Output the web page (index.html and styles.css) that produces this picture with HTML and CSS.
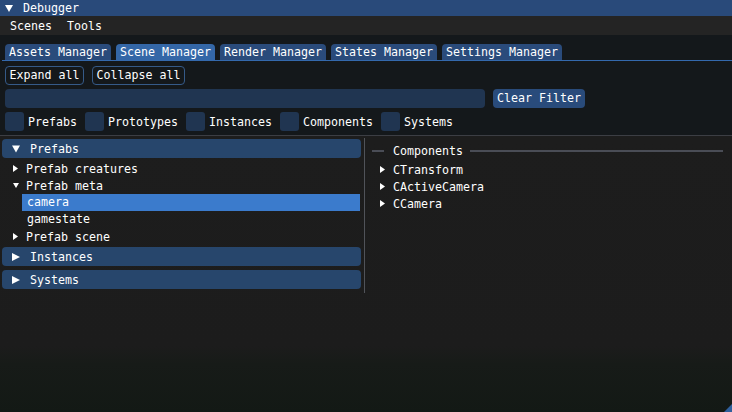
FILE: index.html
```html
<!DOCTYPE html>
<html>
<head>
<meta charset="utf-8">
<link rel="stylesheet" href="styles.css">
</head>
<body>
<div class="window">
  <div class="titlebar">
    <svg class="tri-title" width="8" height="7" viewBox="0 0 8 7"><polygon points="0,0 8,0 4,7" fill="#fff"/></svg>
    <span>Debugger</span>
  </div>
  <div class="menubar"><span>Scenes</span><span>Tools</span></div>
  <div class="top">
    <div class="tabbar">
      <div class="tab">Assets Manager</div>
      <div class="tab active">Scene Manager</div>
      <div class="tab">Render Manager</div>
      <div class="tab">States Manager</div>
      <div class="tab">Settings Manager</div>
    </div>
    <div class="row buttons">
      <button class="btn outline">Expand all</button>
      <button class="btn outline">Collapse all</button>
    </div>
    <div class="row filter">
      <div class="input"></div>
      <button class="btn filled">Clear Filter</button>
    </div>
    <div class="row checks">
      <label class="check"><span class="box"></span>Prefabs</label>
      <label class="check"><span class="box"></span>Prototypes</label>
      <label class="check"><span class="box"></span>Instances</label>
      <label class="check"><span class="box"></span>Components</label>
      <label class="check"><span class="box"></span>Systems</label>
    </div>
  </div>
  <div class="sep"></div>
  <div class="panels">
    <div class="left">
      <div class="header">
        <svg class="htri" width="8" height="8" viewBox="0 0 8 8"><polygon points="0,0.5 8,0.5 4,7.5" fill="#fff"/></svg>
        <span>Prefabs</span>
      </div>
      <div class="tree">
        <div class="node">
          <svg class="ntri" width="6" height="7" viewBox="0 0 6 7"><polygon points="0,0 5,3.5 0,7" fill="#fff"/></svg>
          <span>Prefab creatures</span>
        </div>
        <div class="node">
          <svg class="ntri" width="6" height="7" viewBox="0 0 6 7"><polygon points="0,1 6,1 3,6" fill="#fff"/></svg>
          <span>Prefab meta</span>
        </div>
        <div class="leaf selected">camera</div>
        <div class="leaf">gamestate</div>
        <div class="node">
          <svg class="ntri" width="6" height="7" viewBox="0 0 6 7"><polygon points="0,0 5,3.5 0,7" fill="#fff"/></svg>
          <span>Prefab scene</span>
        </div>
      </div>
      <div class="header h-instances">
        <svg class="htri" width="8" height="8" viewBox="0 0 8 8"><polygon points="0,0 8,4 0,8" fill="#fff"/></svg>
        <span>Instances</span>
      </div>
      <div class="header h-systems">
        <svg class="htri" width="8" height="8" viewBox="0 0 8 8"><polygon points="0,0 8,4 0,8" fill="#fff"/></svg>
        <span>Systems</span>
      </div>
    </div>
    <div class="vsep"></div>
    <div class="right">
      <div class="septext"><span class="sline short"></span><span class="stitle">Components</span><span class="sline long"></span></div>
      <div class="items">
        <div class="item"><svg class="ntri" width="6" height="7" viewBox="0 0 6 7"><polygon points="0,0 5,3.5 0,7" fill="#fff"/></svg><span>CTransform</span></div>
        <div class="item"><svg class="ntri" width="6" height="7" viewBox="0 0 6 7"><polygon points="0,0 5,3.5 0,7" fill="#fff"/></svg><span>CActiveCamera</span></div>
        <div class="item"><svg class="ntri" width="6" height="7" viewBox="0 0 6 7"><polygon points="0,0 5,3.5 0,7" fill="#fff"/></svg><span>CCamera</span></div>
      </div>
    </div>
  </div>
  <svg class="grip" width="8" height="8" viewBox="0 0 8 8"><polygon points="8,0 8,8 0,8" fill="#2f5f9c"/></svg>
</div>
</body>
</html>
```
FILE: styles.css
```css
html, body {
  margin: 0;
  padding: 0;
}
body {
  width: 732px;
  height: 412px;
  overflow: hidden;
  background: #1c1c1c;
  font-family: "DejaVu Sans Mono", "Liberation Mono", monospace;
  font-size: 11.63px;
  color: #ffffff;
}
.window {
  position: relative;
  width: 732px;
  height: 412px;
  display: flex;
  flex-direction: column;
}
.titlebar {
  height: 16px;
  background: #294a7a;
  display: flex;
  align-items: center;
  padding-left: 5px;
  flex: none;
}
.tri-title {
  margin-right: 10px;
}
.menubar {
  height: 19px;
  background: #242424;
  display: flex;
  align-items: center;
  gap: 15px;
  padding-left: 10px;
  flex: none;
}
.top {
  background: #14181b;
  padding: 9px 0 4px 0;
  flex: none;
}
.tabbar {
  display: flex;
  gap: 5px;
  padding-left: 3px;
  margin-left: 2px;
  border-bottom: 1px solid #3469ad;
}
.tab {
  height: 16px;
  line-height: 16px;
  padding: 0 4px;
  background: #2a4b7b;
  border-radius: 4px 4px 0 0;
  white-space: nowrap;
}
.tab.active {
  background: #3467a7;
}
.row {
  display: flex;
  padding-left: 5px;
}
.buttons {
  margin-top: 5px;
  gap: 8px;
}
.btn {
  height: 19px;
  box-sizing: border-box;
  margin: 0;
  padding: 0 3.5px;
  border: 1px solid #355a88;
  border-radius: 4px;
  background: transparent;
  color: #ffffff;
  font: inherit;
  line-height: 17px;
  white-space: nowrap;
}
.btn.filled {
  border: none;
  padding: 0 4px;
  background: #294b7b;
}
.filter {
  margin-top: 4px;
  gap: 8px;
}
.input {
  width: 480px;
  height: 19px;
  background: #203551;
  border-radius: 4px;
}
.checks {
  margin-top: 4px;
  gap: 8px;
}
.check {
  display: flex;
  align-items: center;
  gap: 4px;
  height: 19px;
}
.box {
  width: 19px;
  height: 19px;
  background: #203551;
  border-radius: 3px;
}
.sep {
  height: 1px;
  background: #3c3e44;
  flex: none;
}
.panels {
  flex: 1;
  display: flex;
  align-items: flex-start;
  background: linear-gradient(to bottom, #1d1d1d 0px, #1c1c1c 210px, #171b18 228px, #131915 276px);
}
.left {
  width: 359px;
  padding: 3px 0 0 2px;
}
.header {
  height: 19px;
  border-radius: 4px;
  background: #27466c;
  display: flex;
  align-items: center;
  padding-left: 10px;
}
.htri {
  margin-right: 10px;
}
.h-instances {
  margin-top: 2px;
}
.h-systems {
  margin-top: 4px;
}
.tree {
  margin-top: 2px;
}
.node {
  height: 17px;
  display: flex;
  align-items: center;
  padding-left: 11px;
}
.ntri {
  margin-right: 7px;
  flex: none;
}
.leaf {
  height: 17px;
  line-height: 17px;
  margin-left: 20px;
  margin-right: 1px;
  padding-left: 5px;
}
.leaf.selected {
  background: #3b7bcc;
}
.vsep {
  width: 1px;
  height: 155px;
  margin-left: 3px;
  margin-top: 2px;
  background: #505359;
  flex: none;
}
.right {
  flex: 1;
  padding: 6px 9px 0 7px;
}
.septext {
  display: flex;
  align-items: center;
  height: 17px;
}
.sline {
  height: 2px;
  background: #4a4d56;
}
.sline.short {
  width: 12px;
}
.sline.long {
  flex: 1;
}
.stitle {
  margin: 0 7px 0 9px;
}
.items {
  margin-top: 2px;
}
.item {
  height: 17px;
  display: flex;
  align-items: center;
  padding-left: 8px;
}
.grip {
  position: absolute;
  right: 0;
  bottom: 0;
}
```
